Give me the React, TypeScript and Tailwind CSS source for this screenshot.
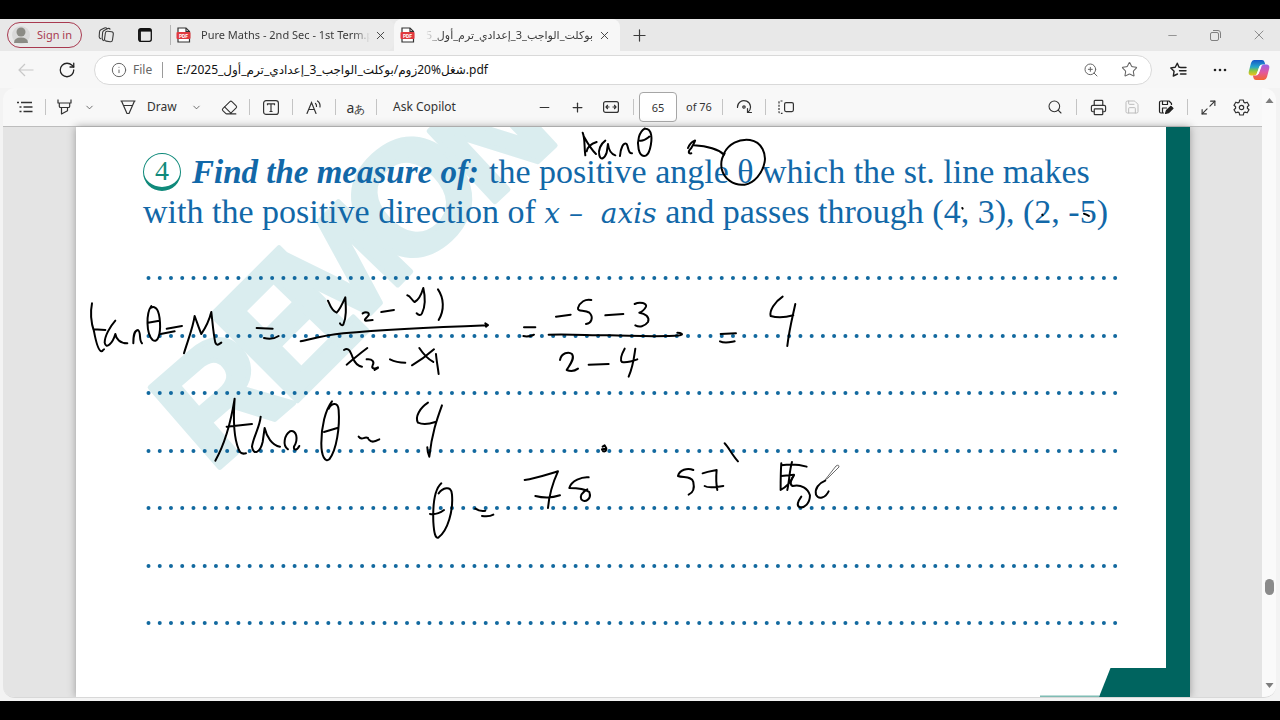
import type { ReactNode } from 'react'
import { FiMaximize2 } from 'react-icons/fi'
import {
  ChevronDown,
  Eraser,
  Info,
  Minus,
  Plus,
  Printer,
  RotateCw,
  Save,
  Search,
  Star,
  X,
  ZoomIn,
} from 'lucide-react'

const FILE_URL = 'E:/شغل%20زوم/بوكلت_الواجب_3_إعدادي_ترم_أول_2025.pdf'
const ANSWER_ROWS = [0, 1, 2, 3, 4, 5, 6]

// Watermark letters follow a slightly bent baseline
const WATERMARK = [
  { letter: 'R', place: 'translate(212 474) rotate(-41)', size: 154 },
  { letter: 'E', place: 'translate(289 409) rotate(-45)', size: 176 },
  { letter: 'M', place: 'translate(333 352) rotate(-46)', size: 146 },
  { letter: 'O', place: 'translate(404 280) rotate(-43)', size: 160 },
  { letter: 'N', place: 'translate(488 208) rotate(-43)', size: 140 },
]

// Pen strokes, grouped by the line of working they belong to
const INK = [
  {
    id: 'tan-note',
    place: 'translate(470 120) scale(0.3333)',
    strokes: [
      'M338 38C346 58 342 78 346 106M342 50C352 68 364 88 378 102M350 94C352 82 362 72 380 66',
      'M406 62C392 72 384 90 388 106C392 122 404 116 410 98L414 72C416 90 424 102 436 106',
      'M450 108C452 84 460 66 470 72C476 82 474 102 486 100',
      'M524 26C508 36 500 62 506 88C512 114 532 116 540 86C548 56 546 26 526 26M510 62C522 64 530 56 538 50',
      'M664 100C652 102 656 92 664 84C672 70 678 58 674 62C664 66 658 74 654 84M672 76C706 78 740 84 762 104',
      'M762 100C776 72 806 56 840 60C878 66 888 104 884 126C878 160 852 190 824 194C790 198 762 176 755 146C752 128 754 114 764 100',
    ],
  },
  {
    id: 'point-marks',
    place: 'translate(850 120) scale(0.3333)',
    strokes: ['M337 264L338 266', 'M577 284L578 286', 'M702 281C708 282 712 284 717 288'],
  },
  {
    id: 'slope',
    place: 'translate(80 280) scale(0.3333)',
    strokes: [
      'M36 70C30 100 34 130 42 154C48 186 56 212 64 214C70 214 66 210 72 208M40 148L76 150',
      'M106 122C90 140 74 168 74 188C78 210 98 190 106 162C108 176 120 190 142 190',
      'M160 190C160 166 162 152 174 150C184 156 176 180 186 190',
      'M214 78C198 100 198 160 218 180C234 192 242 160 240 128C238 92 228 74 212 84M204 128L238 122',
      'M260 146L306 138M242 162L284 154',
      'M312 220C324 180 340 140 344 108C350 124 358 148 364 162C376 144 388 120 394 96C398 130 400 160 406 188C410 198 416 194 424 188',
      'M530 144L578 146M552 174C568 178 584 176 596 168',
      'M744 62C750 76 756 94 770 98C780 88 788 70 796 52C798 84 800 112 790 134C786 138 782 134 780 130',
      'M848 100C860 92 872 100 864 108C858 116 850 120 858 122L878 120',
      'M904 96L942 90',
      'M982 46C992 48 996 62 1004 66C1016 60 1024 44 1030 24C1036 50 1036 80 1026 100C1022 108 1016 106 1010 100',
      'M1074 28C1092 54 1094 90 1076 120',
      'M662 184C690 178 730 166 790 160C900 150 1060 142 1224 136M1216 130L1224 135L1218 140',
      'M792 210C806 200 812 216 818 232C824 248 834 258 846 260M862 204C840 220 820 238 800 254',
      'M860 238C878 236 884 246 878 256C874 264 882 270 894 262M884 270L894 264',
      'M930 238C946 246 958 248 976 248',
      'M1018 204C1030 222 1046 238 1060 246M1062 208C1042 226 1020 242 996 256M1068 222C1070 244 1074 264 1076 282',
    ],
  },
  {
    id: 'tan-result',
    place: 'translate(80 280) scale(0.3333)',
    strokes: [
      'M406 542C430 500 452 430 464 356C460 410 460 470 476 508C480 522 490 522 498 520M440 440L516 432',
      'M542 410C540 440 520 470 516 500C520 526 540 520 548 486L554 444C560 470 576 496 600 500',
      'M624 508C606 496 614 464 630 454C650 448 656 478 642 500C640 510 650 514 658 498',
      'M756 364C736 390 724 440 724 490C724 530 736 548 748 538C770 510 780 440 776 390C774 366 756 368 746 386M732 456L772 444',
      'M836 470C846 484 852 468 864 474M866 478C876 490 886 484 898 478',
      'M1044 368C1020 384 1004 410 1014 428C1028 434 1048 432 1066 426M1086 376C1070 420 1056 460 1048 530C1044 520 1042 512 1042 502',
    ],
  },
  {
    id: 'fraction',
    place: 'translate(500 280) scale(0.3333)',
    strokes: [
      'M72 142L106 142M70 168C84 172 92 168 102 164',
      'M168 110L212 104',
      'M274 60C256 56 240 66 234 84C232 96 254 88 268 98C282 112 274 130 258 132',
      'M316 106L370 102',
      'M404 72C420 64 442 70 438 80C432 92 424 96 418 98C436 100 450 112 444 126C434 140 418 142 406 136',
      'M146 164C220 162 260 166 330 166C420 168 480 172 540 166M532 158C544 158 552 164 540 166',
      'M180 240C184 218 206 214 216 222C226 236 208 256 200 270C214 276 226 272 234 266',
      'M266 254L326 252',
      'M374 206C364 224 360 240 366 246C380 248 396 244 412 238M406 206C402 232 400 258 386 290',
      'M662 162L708 160M660 184C676 192 692 186 704 184',
      'M848 50C824 66 808 92 812 108C832 114 858 112 880 106M886 72C878 110 868 146 862 198',
    ],
  },
  {
    id: 'theta',
    place: 'translate(400 390) scale(0.3333)',
    strokes: [
      'M124 280C106 296 98 340 100 396C102 428 106 448 116 442C144 420 160 362 156 314C154 282 126 296 116 310M90 372C104 374 116 372 132 360',
      'M226 356C238 364 244 364 256 362M246 378C260 380 270 380 280 374',
      'M374 270C406 266 440 254 474 244C462 270 448 310 444 354M406 318C430 324 456 324 480 316',
      'M566 262C546 260 514 272 508 294C528 294 554 296 568 306C576 328 554 340 544 328C538 314 548 306 562 298',
      'M608 170L614 166C622 176 620 186 610 184L606 178L618 176',
      'M880 240C862 232 838 240 834 258C850 264 876 258 880 276C884 294 880 308 866 314',
      'M908 250C924 244 940 242 950 240C948 262 948 280 952 300M914 288C926 296 948 292 970 288',
      'M974 160C986 172 996 194 1014 214',
      'M1144 220C1142 246 1142 272 1142 300C1156 292 1172 276 1178 262M1144 226C1166 222 1194 222 1220 230M1176 216C1168 244 1168 276 1162 300M1144 258L1182 254',
      'M1182 256C1172 270 1168 284 1178 288C1204 282 1224 296 1230 316C1230 340 1214 354 1200 352C1188 348 1194 334 1204 320',
      'M1276 272C1256 280 1244 296 1248 314C1256 330 1276 324 1286 304',
    ],
  },
]

function IconButton({ label, children, className = 'w-[34px]' }: { label: string; children: ReactNode; className?: string }) {
  return (
    <button type="button" aria-label={label} className={`flex h-8 shrink-0 items-center justify-center ${className}`}>
      {children}
    </button>
  )
}

function Divider() {
  return <span className="mx-1 h-4 w-px shrink-0 bg-[#c4c4c4]" />
}

function PdfIcon() {
  return (
    <svg width="16" height="16" viewBox="0 0 16 16" className="shrink-0" aria-hidden="true">
      <path d="M2 5V1h8l3.500 3.500V15H2v-4" fill="#fff" stroke="#333" strokeWidth="1.200" />
      <path d="M10 1v3.500h3.500" fill="none" stroke="#333" strokeWidth="1.200" />
      <rect x="0.500" y="5" width="14" height="7" rx="1" fill="#e0393e" />
      <text x="7.500" y="10.500" textAnchor="middle" fontSize="5" fontWeight="700" fill="#fff" fontFamily="Roboto, sans-serif">
        PDF
      </text>
    </svg>
  )
}

function CopilotIcon() {
  return (
    <svg width="22" height="22" viewBox="0 0 22 22" aria-hidden="true">
      <defs>
        <linearGradient id="copilotLeft" x1="0" y1="0" x2="0" y2="1">
          <stop offset="0" stopColor="#1556c8" />
          <stop offset="0.450" stopColor="#25a6c9" />
          <stop offset="0.700" stopColor="#8dc63f" />
          <stop offset="1" stopColor="#f3c21b" />
        </linearGradient>
        <linearGradient id="copilotRight" x1="0" y1="0" x2="0" y2="1">
          <stop offset="0" stopColor="#9a63e8" />
          <stop offset="0.500" stopColor="#e2589f" />
          <stop offset="1" stopColor="#f4662f" />
        </linearGradient>
      </defs>
      <path d="M6 1h8q2 0 2.500 2l.8 2.500H14q-2 0-2.800 2.300L9 14q-.8 2.500-3 2.500H3Q0 16 .8 12.500L3 4Q4 1 6 1z" fill="url(#copilotLeft)" />
      <path d="M16 21H8q-2 0-2.500-2l-.6-2.500H8q2 0 2.800-2.500L13 8q.8-2.500 3-2.500h3Q22 6 21.200 9.500L19 18q-1 3-3 3z" fill="url(#copilotRight)" />
      <path d="M11.500 7.500h2L10.500 15H8.800z" fill="#fff" />
    </svg>
  )
}

function TabStrip() {
  return (
    <div className="flex h-8 shrink-0 items-center bg-[#e8e8e8] text-[11px] text-[#3b3b3b]">
      <button type="button" className="ml-[7px] flex h-[26px] w-[75px] shrink-0 items-center gap-[7px] rounded-full border border-[#a83a50] pl-1 text-[#a83a50]">
        <svg width="18" height="18" viewBox="0 0 18 18" aria-hidden="true">
          <circle cx="9" cy="9" r="9" fill="#d9d9d9" />
          <circle cx="9" cy="6" r="4.500" fill="#8b8b85" />
          <path d="M2 17q0-5.500 7-5.500t7 5.500z" fill="#8b8b85" />
        </svg>
        Sign in
      </button>
      <IconButton label="Workspaces" className="ml-[7px] w-[34px]">
        <svg width="17" height="16" viewBox="0 0 17 16" fill="none" stroke="#3b3b3b" strokeWidth="1.100" strokeLinejoin="round" aria-hidden="true">
          <rect x="7" y="4.500" width="8" height="10" rx="2" transform="rotate(8 11 9)" />
          <path d="M6 13.800Q4 13 4.200 11L4.600 5.500Q4.800 4 6 3.400L9.800 1.600q1.700-.6 2.500 1M3.200 12Q1 11.500 1.200 9.500L1.500 5Q1.600 3.500 2.900 2.800L6.500 1Q8 .3 9 1.500" />
        </svg>
      </IconButton>
      <IconButton label="Tab actions" className="ml-1 w-[36px]">
        <svg width="14" height="14" viewBox="0 0 14 14" fill="none" stroke="#111" strokeWidth="1.300" aria-hidden="true">
          <rect x="0.700" y="0.700" width="12.600" height="12.600" rx="2" />
          <path d="M1 2.300h12" strokeWidth="2.600" />
          <path d="M2 3v10.500" strokeWidth="1.800" />
        </svg>
      </IconButton>
      <span className="ml-[7px] h-5 w-px shrink-0 bg-[#b5b5b5]" />
      <div className="flex h-full w-[223px] shrink-0 items-center rounded-r-lg bg-[#ebebeb] pl-[5px]">
        <PdfIcon />
        <span className="ml-[9px] w-[169px] overflow-hidden whitespace-nowrap [mask-image:linear-gradient(to_left,transparent,black_16px)]">
          Pure Maths - 2nd Sec - 1st Term.pdf
        </span>
        <button type="button" aria-label="Close tab" className="ml-1">
          <X size={13} strokeWidth={1.7} />
        </button>
      </div>
      <div className="flex h-full w-[226px] shrink-0 items-center rounded-t-lg bg-[#f7f7f7] pl-[6px]">
        <PdfIcon />
        <span dir="rtl" className="ml-[10px] w-[167px] overflow-hidden whitespace-nowrap [mask-image:linear-gradient(to_right,transparent,black_16px)]">
          بوكلت_الواجب_3_إعدادي_ترم_أول_2025
        </span>
        <button type="button" aria-label="Close tab" className="ml-[5px]">
          <X size={13} strokeWidth={1.7} />
        </button>
      </div>
      <IconButton label="New tab" className="ml-px w-[36px]">
        <Plus size={19} strokeWidth={1.5} />
      </IconButton>
      <div className="ml-auto flex shrink-0 text-[#808080]">
        <IconButton label="Minimize" className="w-[43px]">
          <Minus size={13} strokeWidth={1.5} />
        </IconButton>
        <IconButton label="Restore" className="w-[43px]">
          <svg width="11" height="11" viewBox="0 0 11 11" fill="none" stroke="currentColor" aria-hidden="true">
            <rect x="0.500" y="2.500" width="8" height="8" rx="1.500" />
            <path d="M3 .5h5Q10.500.5 10.500 3v5" />
          </svg>
        </IconButton>
        <IconButton label="Close window" className="w-[43px]">
          <X size={16} strokeWidth={1.3} />
        </IconButton>
      </div>
    </div>
  )
}

function AddressBar() {
  return (
    <div className="flex h-[37px] shrink-0 items-center bg-[#f7f7f7]">
      <IconButton label="Back" className="ml-[9px] w-[34px]">
        <svg width="16" height="14" viewBox="0 0 16 14" fill="none" stroke="#c8c8c8" strokeWidth="1.200" aria-hidden="true">
          <path d="M15.500 7H1M7 1L1 7l6 6" />
        </svg>
      </IconButton>
      <IconButton label="Refresh" className="ml-[7px] w-[34px]">
        <RotateCw size={18} strokeWidth={1.7} color="#222" />
      </IconButton>
      <div className="ml-[10px] flex h-[30px] min-w-0 flex-1 items-center rounded-full border border-[#d9d9d9] bg-white pr-[13px] pl-4 text-[#666]">
        <Info size={16} strokeWidth={1.5} className="rotate-0" />
        <label htmlFor="address" className="ml-[6px]">File</label>
        <span className="ml-[10px] h-4 w-px bg-[#9a9a9a]" />
        <input id="address" readOnly value={FILE_URL} className="ml-[13px] min-w-0 flex-1 bg-transparent text-[#111] outline-none" />
        <button type="button" aria-label="Zoom">
          <ZoomIn size={16} strokeWidth={1.5} />
        </button>
        <button type="button" aria-label="Add to favorites" className="ml-[22px]">
          <Star size={17} strokeWidth={1.5} />
        </button>
      </div>
      <IconButton label="Favorites" className="ml-[9px] w-[34px]">
        <svg width="17" height="16" viewBox="0 0 17 16" fill="none" stroke="#222" strokeWidth="1.400" strokeLinecap="round" strokeLinejoin="round" aria-hidden="true">
          <path d="M9.800 5.200H9L7.300 1.200 5.200 5.300.8 5.900l3.300 3.300-.8 4.800 4.200-2M10.500 5.500H16M9.500 8.700H16M10.500 12H16" />
        </svg>
      </IconButton>
      <IconButton label="More" className="ml-2 w-[34px]">
        <svg width="14" height="4" viewBox="0 0 14 4" fill="#222" aria-hidden="true">
          <circle cx="2" cy="2" r="1.300" />
          <circle cx="7" cy="2" r="1.300" />
          <circle cx="12" cy="2" r="1.300" />
        </svg>
      </IconButton>
      <IconButton label="Copilot" className="mr-1 ml-[5px] w-[34px]">
        <CopilotIcon />
      </IconButton>
    </div>
  )
}

function PdfToolbar() {
  return (
    <div className="flex h-[39px] shrink-0 items-center border-b border-[#bdbdbd] bg-[#f8f8f8] pr-1 pl-[6px] text-[#333]">
      <IconButton label="Contents" className="w-8">
        <svg width="16" height="12" viewBox="0 0 16 12" stroke="#333" strokeWidth="1.300" aria-hidden="true">
          <path d="M0 1.500h2M4 1.500h11M2.500 6h2M6.500 6h9M2.500 10.500h2M6.500 10.500h9" />
        </svg>
      </IconButton>
      <Divider />
      <IconButton label="Highlight" className="w-7">
        <svg width="15" height="16" viewBox="0 0 15 16" fill="none" stroke="#333" strokeWidth="1.200" strokeLinejoin="round" aria-hidden="true">
          <path d="M1 .5v3.500h13V.5M2.300 4v3.200q0 1.300 1.300 1.300h7.800q1.300 0 1.300-1.300V4M4.500 8.500v6.500l6-3.200V8.500" />
        </svg>
      </IconButton>
      <IconButton label="Highlight options" className="w-[22px]">
        <ChevronDown size={11} strokeWidth={1.5} />
      </IconButton>
      <button type="button" className="ml-4 flex h-8 w-[69px] shrink-0 items-center gap-[11px] pl-[4px]">
        <svg width="16" height="15" viewBox="0 0 16 15" fill="none" stroke="#333" strokeWidth="1.200" strokeLinejoin="round" aria-hidden="true">
          <path d="M.5 1h15M1.500 1L7 13.500h2L14.500 1M3.500 5.500h9" />
        </svg>
        Draw
      </button>
      <IconButton label="Draw options" className="w-[22px]">
        <ChevronDown size={11} strokeWidth={1.5} />
      </IconButton>
      <IconButton label="Erase" className="ml-[6px] w-8">
        <Eraser size={17} strokeWidth={1.5} />
      </IconButton>
      <Divider />
      <IconButton label="Add text">
        <svg width="16" height="15" viewBox="0 0 16 15" fill="none" stroke="#333" strokeWidth="1.200" aria-hidden="true">
          <rect x="0.600" y="0.600" width="14.800" height="13.800" rx="2.500" />
          <path d="M4.500 5.200V3.800h7v1.400M8 3.800v7.700M6.500 11.500h3" />
        </svg>
      </IconButton>
      <Divider />
      <IconButton label="Read aloud">
        <svg width="16" height="15" viewBox="0 0 16 15" fill="none" stroke="#333" strokeWidth="1.200" strokeLinecap="round" aria-hidden="true">
          <path d="M1 13.500L5.500 2.500l4.500 11M2.800 9.500h5.500M9.500 3.500q1.200 1 1 3M11.500 1q3 2 2.500 6" />
        </svg>
      </IconButton>
      <Divider />
      <button type="button" aria-label="Translate" className="h-8 w-8 shrink-0 whitespace-nowrap text-[11px]">
        <span className="text-[14px]">a</span>あ
      </button>
      <Divider />
      <button type="button" className="h-8 w-[146px] shrink-0 pl-3 text-left">Ask Copilot</button>

      <IconButton label="Zoom out">
        <Minus size={15} strokeWidth={1.6} />
      </IconButton>
      <IconButton label="Zoom in" className="w-8">
        <Plus size={15} strokeWidth={2} />
      </IconButton>
      <IconButton label="Fit to width" className="w-9">
        <svg width="16" height="12" viewBox="0 0 16 12" fill="none" stroke="#333" strokeWidth="1.200" aria-hidden="true">
          <rect x="0.600" y="0.600" width="14.800" height="10.800" rx="2" />
          <path d="M3 6h3.500M9.500 6H13M4.800 4L3 6l1.800 2M11.200 4L13 6l-1.800 2" />
        </svg>
      </IconButton>
      <Divider />
      <input id="page-number" defaultValue="65" className="ml-px h-[30px] w-[38px] shrink-0 rounded-sm border border-[#a6a6a6] bg-white text-center text-[11px] outline-none" />
      <label htmlFor="page-number" className="ml-[9px] w-8 shrink-0 whitespace-nowrap text-[11px]">of 76</label>
      <Divider />
      <IconButton label="Rotate">
        <svg width="17" height="16" viewBox="0 0 17 16" fill="none" stroke="#333" strokeWidth="1.200" strokeLinecap="round" aria-hidden="true">
          <path d="M1.500 8.500A6.500 6.500 0 1 1 12 13.200M11.500 9.500v4h4" />
          <circle cx="8" cy="8" r="1.200" />
        </svg>
      </IconButton>
      <Divider />
      <IconButton label="Page view" className="w-8">
        <svg width="16" height="14" viewBox="0 0 16 14" fill="none" stroke="#333" strokeWidth="1.200" aria-hidden="true">
          <rect x="6.600" y="2.600" width="8.800" height="9" rx="1.500" />
          <path d="M4.500 1H2.500Q1 1 1 2.500V12q0 1.300 1.500 1.300H4.500" strokeDasharray="2 1.200" />
        </svg>
      </IconButton>

      <div className="ml-auto flex shrink-0 items-center">
        <IconButton label="Find">
          <Search size={16} strokeWidth={1.6} />
        </IconButton>
        <Divider />
        <IconButton label="Print">
          <Printer size={17} strokeWidth={1.7} />
        </IconButton>
        <IconButton label="Save">
          <Save size={16} strokeWidth={1.5} color="#bcbcbc" />
        </IconButton>
        <IconButton label="Save as">
          <svg width="16" height="16" viewBox="0 0 16 16" fill="none" stroke="#222" strokeWidth="1.200" strokeLinejoin="round" aria-hidden="true">
            <path d="M6 14H3Q1.500 14 1.500 12.500v-9Q1.500 2 3 2h8l2.500 2.500V6M4.500 2v3.500h5V2M4.500 14V9H9" />
            <path d="M7.500 14.500l1-3L13 7.300l2 2-4.500 4.400z" fill="#222" />
          </svg>
        </IconButton>
        <Divider />
        <IconButton label="Full screen" className="w-8">
          <FiMaximize2 size={17} strokeWidth={1.6} />
        </IconButton>
        <IconButton label="Settings">
          <svg width="17" height="17" viewBox="0 0 17 17" fill="none" stroke="#333" strokeWidth="1.200" strokeLinejoin="round" aria-hidden="true">
            <path d="M6.700 1h3.600l.5 2.200 1.300.7 2.100-.7 1.800 3.100-1.600 1.500v1.400l1.600 1.500-1.800 3.100-2.100-.7-1.300.7-.5 2.200H6.700l-.5-2.200-1.300-.7-2.100.7L1 10.700l1.600-1.500V7.800L1 6.300l1.800-3.100 2.100.7 1.300-.7z" />
            <circle cx="8.500" cy="8.500" r="2.200" />
          </svg>
        </IconButton>
      </div>
    </div>
  )
}

function Watermark() {
  return (
    <g
      fill="#daedef"
      stroke="#daedef"
      strokeWidth="5"
      strokeLinejoin="round"
      fontFamily="'Liberation Sans Narrow', 'Liberation Sans', sans-serif"
      fontWeight="700"
    >
      {WATERMARK.map((item) => (
        <text key={item.letter} transform={item.place} fontSize={item.size}>
          {item.letter}
        </text>
      ))}
    </g>
  )
}

function Page() {
  return (
    <main className="relative mr-[72px] ml-[73px] min-w-0 flex-1 overflow-hidden border-r-[24px] border-[#00645f] bg-white shadow-[0_0_8px_#999]">
      <svg width="1090" height="570" viewBox="76 127 1090 570" className="absolute top-0 left-0" aria-hidden="true">
        <Watermark />
      </svg>

      <div className="relative pt-[25px] pl-[67px] font-['Liberation_Serif',serif] text-[34px] leading-10 whitespace-nowrap text-[#1268a8]">
        <p className="flex items-center">
          <span className="mr-[11px] flex size-[38px] items-center justify-center rounded-full border border-b-4 border-[#108a7b] text-[28px] text-[#108a7b]">4</span>
          <strong className="mr-[10px] text-[33px] italic">Find the measure of:</strong>
          the positive angle θ which the st. line makes
        </p>
        <p>
          with the positive direction of{' '}
          <i className="font-['DejaVu_Serif',serif] text-[28px] leading-8">x –&nbsp; axis</i> and passes through (4, 3), (2, -5)
        </p>
      </div>

      <div className="relative mt-[44px] ml-[70px] flex h-[349px] flex-col justify-between">
        {ANSWER_ROWS.map((row) => (
          <svg key={row} width="972" height="4" viewBox="0 0 972 4" aria-hidden="true">
            <path d="M2.500 2H970" stroke="#12699f" strokeWidth="4" strokeLinecap="round" strokeDasharray="0 11.240" />
          </svg>
        ))}
      </div>

      <svg width="1090" height="570" viewBox="76 127 1090 570" className="absolute top-0 left-0" aria-hidden="true">
        <g fill="none" stroke="#000" strokeWidth="6" strokeLinecap="round" strokeLinejoin="round">
          {INK.map((group) => (
            <g key={group.id} transform={group.place}>
              {group.strokes.map((d) => (
                <path key={d} d={d} />
              ))}
            </g>
          ))}
        </g>
        <path d="M825 480L836 466Q839 464 839 467L828 478z" fill="#fff" stroke="#444" strokeWidth="0.800" />
      </svg>

      <svg width="126" height="30" viewBox="0 0 126 30" className="absolute right-0 bottom-0" aria-hidden="true">
        <path d="M70.500 1H126V30H59z" fill="#00645f" />
        <path d="M0 28.500H59V30H0z" fill="#7fbcb4" />
      </svg>
    </main>
  )
}

function ScrollBar() {
  return (
    <div className="flex w-[14px] shrink-0 flex-col items-center justify-between bg-[#fafafa] pt-[10px] pb-[9px]">
      <svg width="9" height="5" viewBox="0 0 8 5" fill="#7d7d7d" aria-hidden="true">
        <path d="M0 5L4 0l4 5z" />
      </svg>
      <span className="mt-auto mb-[88px] h-4 w-[9px] rounded-full bg-[#8a8a8a]" />
      <svg width="9" height="5" viewBox="0 0 8 5" fill="#7d7d7d" aria-hidden="true">
        <path d="M0 0h8L4 5z" />
      </svg>
    </div>
  )
}

export default function App() {
  return (
    <div className="flex h-screen flex-col overflow-hidden bg-black py-[19px] font-['Noto_Sans','DejaVu_Sans',sans-serif] text-[12px]">
      <TabStrip />
      <AddressBar />
      <div className="flex min-h-0 flex-1 bg-[#f3f3f3] pr-1 pb-[3px] pl-[3px]">
        <div className="flex min-h-0 min-w-0 flex-1 overflow-hidden rounded-xl border-b border-[#d8d8d8]">
          <div className="flex min-w-0 flex-1 flex-col">
            <PdfToolbar />
            <div className="flex min-h-0 flex-1 bg-[#e4e4e4]">
              <Page />
            </div>
          </div>
          <ScrollBar />
        </div>
      </div>
    </div>
  )
}
